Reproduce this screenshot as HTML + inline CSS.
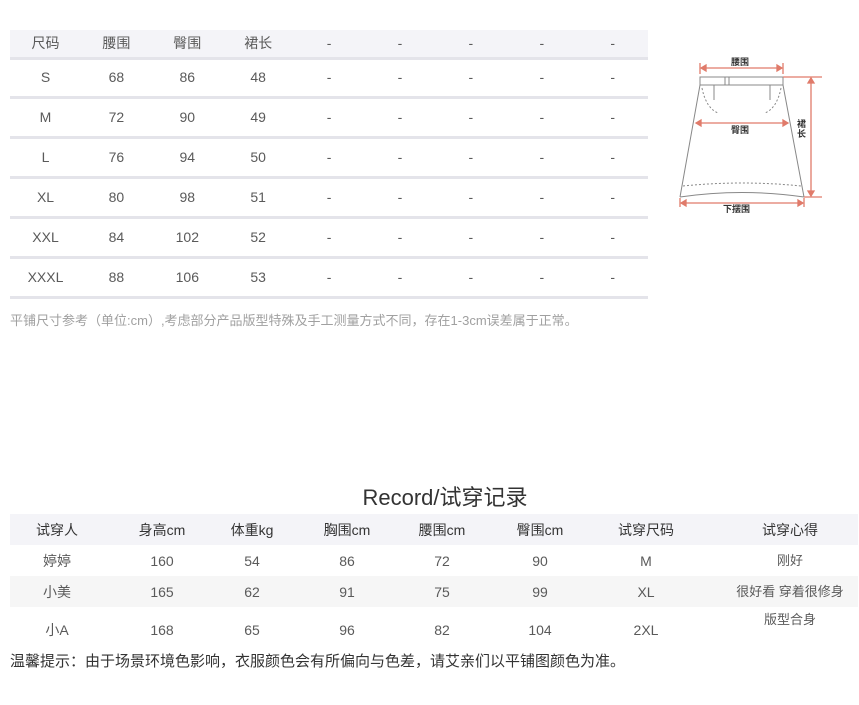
<!DOCTYPE html>
<html><head><meta charset="utf-8"><style>
*{margin:0;padding:0;box-sizing:border-box}
body{width:859px;height:705px;background:#fff;position:relative;overflow:hidden;font-family:"Liberation Sans","Noto Sans CJK SC",sans-serif;color:#5a5a5a;font-size:14px}
.a{position:absolute;white-space:nowrap;transform:translateX(-50%);line-height:18px}
.bar{position:absolute;left:10px;width:638px;height:3px;background:#e4e4ea}
</style></head><body>
<div style="position:absolute;left:10px;top:30px;width:638px;height:27px;background:#f4f4f8"></div>
<div class="bar" style="top:57px"></div>
<div class="bar" style="top:96px"></div>
<div class="bar" style="top:136px"></div>
<div class="bar" style="top:176px"></div>
<div class="bar" style="top:216px"></div>
<div class="bar" style="top:256px"></div>
<div class="bar" style="top:296px"></div>
<div id="t1"></div>
<div style="position:absolute;left:10px;top:312px;font-size:13px;color:#a0a0a0;line-height:17px">平铺尺寸参考（单位:cm）,考虑部分产品版型特殊及手工测量方式不同，存在1-3cm误差属于正常。</div>

<svg style="position:absolute;left:0;top:0" width="859" height="705">
<g stroke="#888" fill="none" stroke-width="1">
<path d="M700 77 L783 77 L783 85 L700 85 Z"/>
<path d="M700 85 L680 197 M783 85 L804 197"/>
<path d="M680 197 Q742 188 804 197" />
<path d="M683 186 Q742 180 801 186" stroke-dasharray="2 2"/>
<path d="M702 88 Q706 108 718 113 M781 88 Q777 108 765 113" stroke-dasharray="2 2"/>
<path d="M714 85 L714 100 M770 85 L770 100"/>
<rect x="725" y="77" width="4" height="8"/>
</g>
<g stroke="#e07b6a" fill="#e07b6a" stroke-width="1.3">
<line x1="701" y1="68" x2="782" y2="68"/><line x1="700" y1="63" x2="700" y2="74"/><line x1="783" y1="63" x2="783" y2="74"/>
<line x1="696" y1="123" x2="788" y2="123"/>
<line x1="681" y1="203" x2="803" y2="203"/><line x1="680" y1="198" x2="680" y2="207"/><line x1="804" y1="198" x2="804" y2="207"/>
<line x1="783" y1="77" x2="822" y2="77"/><line x1="804" y1="197" x2="822" y2="197"/>
<line x1="811" y1="78" x2="811" y2="196"/>
<path d="M811 78 l-3 5 h6z M811 196 l-3 -5 h6z M696 123 l5 -3 v6z M788 123 l-5 -3 v6z M701 68 l5 -3 v6z M782 68 l-5 -3 v6z M681 203 l5 -3 v6z M803 203 l-5 -3 v6z"/>
</g>
<g font-size="9" fill="#333" font-family="Liberation Sans,Noto Sans CJK SC,sans-serif" font-weight="bold">
<text x="731" y="65">腰围</text>
<text x="731" y="133">臀围</text>
<text x="723" y="212">下摆围</text>
<text x="797" y="127">裙</text><text x="797" y="137">长</text>
</g>
</svg>

<div class="a" style="left:445px;top:484px;font-size:22px;line-height:28px;color:#333">Record/试穿记录</div>
<div style="position:absolute;left:10px;top:514px;width:848px;height:31px;background:#f4f4f8"></div>
<div style="position:absolute;left:10px;top:576px;width:848px;height:31px;background:#f6f6f6"></div>
<div id="t2"></div>
<div style="position:absolute;left:10px;top:652px;font-size:15px;color:#333;line-height:19px">温馨提示：由于场景环境色影响，衣服颜色会有所偏向与色差，请艾亲们以平铺图颜色为准。</div>
<script>
var r1=[["尺码","腰围","臀围","裙长","-","-","-","-","-"],["S","68","86","48","-","-","-","-","-"],["M","72","90","49","-","-","-","-","-"],["L","76","94","50","-","-","-","-","-"],["XL","80","98","51","-","-","-","-","-"],["XXL","84","102","52","-","-","-","-","-"],["XXXL","88","106","53","-","-","-","-","-"]];
var y1=[34,68,108,148,188,228,268],h="";
r1.forEach(function(r,i){r.forEach(function(c,j){h+='<div class="a" style="left:'+(45.5+j*70.9)+'px;top:'+y1[i]+'px">'+c+'</div>';});});
document.getElementById("t1").innerHTML=h;
var cx=[57,162,252,347,442,540,646,790];
var r2=[["试穿人","身高cm","体重kg","胸围cm","腰围cm","臀围cm","试穿尺码","试穿心得"],["婷婷","160","54","86","72","90","M","刚好"],["小美","165","62","91","75","99","XL","很好看 穿着很修身"],["小A","168","65","96","82","104","2XL","版型合身"]];
var y2=[521,552,583,621];h="";
r2.forEach(function(r,i){r.forEach(function(c,j){var y=y2[i];if(i==3&&j==7)y=611;h+='<div class="a" style="left:'+cx[j]+'px;top:'+y+'px;'+(i==0?'color:#333':'')+(j==7&&i>0?';font-size:13px':'')+'">'+c+'</div>';});});
document.getElementById("t2").innerHTML=h;
</script>
</body></html>
